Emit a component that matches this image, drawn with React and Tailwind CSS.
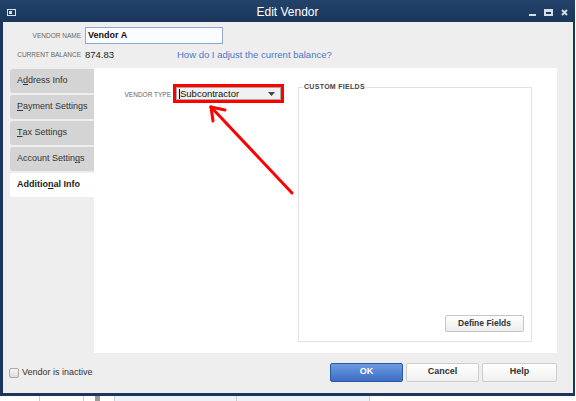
import React from 'react';

const tabs = [
  ['A', 'd', 'dress Info'],
  ['', 'P', 'ayment Settings'],
  ['', 'T', 'ax Settings'],
  ['Account Settin', 'g', 's'],
];

function Tab({ parts, active }) {
  const [pre, key, post] = parts;
  return (
    <div
      className={`h-[24px] flex items-center pl-[7px] rounded-l-[3px] text-[9px] ${
        active ? 'bg-white text-[#222] font-bold' : 'bg-[#d4d4d4] text-[#333]'
      }`}
    >
      {pre}
      <span className="underline">{key}</span>
      {post}
    </div>
  );
}

export default function App() {
  return (
    <div className="w-[576px] h-[401px] bg-white relative overflow-hidden font-['Liberation_Sans',Arial,sans-serif]">
      {/* app content peeking out below the dialog */}
      <div className="absolute left-0 right-0 bottom-0 h-[5px] flex">
        <div className="w-[40px] border-r border-[#ccc]" />
        <div className="w-[44px] border-r border-[#ccc]" />
        <div className="w-[11px]" />
        <div className="w-[5px] bg-[#999]" />
        <div className="w-[15px] border-r border-[#ccc]" />
        <div className="w-[122px] border-r border-[#ccc] bg-[#eef3fa]" />
        <div className="w-[133px] border-r border-[#ccc] bg-[#eef3fa]" />
        <div className="flex-1" />
      </div>

      {/* dialog window */}
      <div className="w-[575px] h-[396px] bg-[#1b365a] pl-[3px] pr-[2px] pb-[3px] flex flex-col">
        {/* title bar */}
        <div className="h-[22px] flex items-center relative bg-gradient-to-b from-[#22436b] to-[#1b365a] -ml-[3px] -mr-[2px]">
          <svg width="9" height="7" viewBox="0 0 9 7" className="absolute left-[7px] top-[9px]">
            <rect x="0.5" y="0.5" width="8" height="6" fill="none" stroke="#d8e0ea" />
            <rect x="2" y="2" width="3" height="3" fill="#d8e0ea" />
          </svg>
          <div className="flex-1 text-center text-white text-[12px] pt-[1px]">Edit Vendor</div>
          <div className="absolute right-[7px] top-[9px] flex items-end gap-[8px]">
            <div className="w-[7px] h-[2px] bg-[#d6dde6]" />
            <div className="w-[9px] h-[7px] border-[2px] border-t-[3px] border-[#d6dde6]" />
            <svg width="7" height="7" viewBox="0 0 7 7">
              <path d="M1 1 L6 6 M6 1 L1 6" stroke="#d6dde6" strokeWidth="2" />
            </svg>
          </div>
        </div>

        {/* client area */}
        <div className="flex-1 bg-[#eeeeee] flex flex-col">
          <div className="flex items-center h-[17px] mt-[5px]">
            <div className="w-[79px] text-right text-[6.5px] text-[#666] pr-[1px]">VENDOR NAME</div>
            <div className="ml-[3px] w-[138px] h-[17px] border border-[#8aa9d4] bg-[#fbfcff] flex items-center pl-[2px] text-[9px] font-bold text-[#111]">
              Vendor A
            </div>
          </div>
          <div className="flex items-center h-[12px] mt-[5px]">
            <div className="w-[79px] text-right text-[6.5px] text-[#666] pr-[1px]">CURRENT BALANCE</div>
            <div className="ml-[3px] w-[92px] text-[9.5px] text-[#222]">874.83</div>
            <div className="text-[9.5px] text-[#4a78c6]">How do I adjust the current balance?</div>
          </div>

          {/* tabs + page */}
          <div className="flex mt-[7px] h-[285px]">
            <div className="ml-[7px] w-[84px] flex flex-col gap-[2px] pt-[1px]">
              {tabs.map((t) => (
                <Tab key={t.join('')} parts={t} />
              ))}
              <Tab parts={['Additio', 'n', 'al Info']} active />
            </div>

            <div className="w-[463px] bg-white relative flex pt-[16px]">
              <div className="w-[190px] flex items-start">
                <div className="w-[78px] text-right text-[6.5px] text-[#666] pr-[1px] mt-[6px]">VENDOR TYPE</div>
                <div className="ml-[1px] w-[111px] h-[19px] border-[3px] border-[#ff0000] bg-[#ff0000]">
                  <div className="h-full bg-[#f0f0f0] border border-[#a8a8a8] flex items-center pl-[2px] pr-[5px] text-[9.5px] text-[#111]">
                    <span className="border-l border-[#111] leading-[10px]">Subcontractor</span>
                    <span className="flex-1" />
                    <svg width="7" height="4" viewBox="0 0 7 4">
                      <path d="M0 0 L7 0 L3.5 4 Z" fill="#444" />
                    </svg>
                  </div>
                </div>
              </div>

              <fieldset className="ml-[14px] mt-[-2px] w-[234px] h-[260px] border border-[#e2e2e2] flex flex-col justify-end items-end pr-[7px] pb-[9px] px-[4px]">
                <legend className="text-[7px] font-bold text-[#444] tracking-[0.3px] px-[1px]">CUSTOM FIELDS</legend>
                <button className="w-[79px] h-[17px] border border-[#c6c6c6] rounded-[2px] bg-gradient-to-b from-white to-[#ececec] text-[8.5px] font-bold text-[#333]">
                  Define Fields
                </button>
              </fieldset>

              {/* callout arrow pointing at the vendor type field */}
              <svg className="absolute left-0 top-0 pointer-events-none" width="463" height="285">
                <g stroke="#ff0000" strokeWidth="3" strokeLinecap="round" fill="none">
                  <path d="M198 125 L117 39" />
                  <path d="M117 39 L119 53" />
                  <path d="M117 39 L131 42" />
                </g>
              </svg>
            </div>
          </div>

          {/* footer */}
          <div className="flex-1 flex items-center">
            <div className="flex items-center ml-[6px] w-[321px]">
              <div className="w-[10px] h-[10px] border border-[#aaa] rounded-[2px] bg-gradient-to-b from-[#f4f4f4] to-[#dcdcdc]" />
              <span className="ml-[3px] text-[9px] text-[#333]">Vendor is inactive</span>
            </div>
            <div className="flex gap-[3px] mb-[2px]">
              <button className="w-[73px] h-[19px] rounded-[2px] border border-[#2c5aa6] bg-gradient-to-b from-[#6d9ae0] to-[#3e6ec5] text-white text-[9px] font-bold">
                OK
              </button>
              <button className="w-[73px] h-[19px] rounded-[2px] border border-[#cdcdcd] bg-gradient-to-b from-white to-[#f0f0f0] text-[#333] text-[9px] font-bold">
                Cancel
              </button>
              <button className="w-[75px] h-[19px] rounded-[2px] border border-[#cdcdcd] bg-gradient-to-b from-white to-[#f0f0f0] text-[#333] text-[9px] font-bold">
                Help
              </button>
            </div>
          </div>
        </div>
      </div>
    </div>
  );
}
